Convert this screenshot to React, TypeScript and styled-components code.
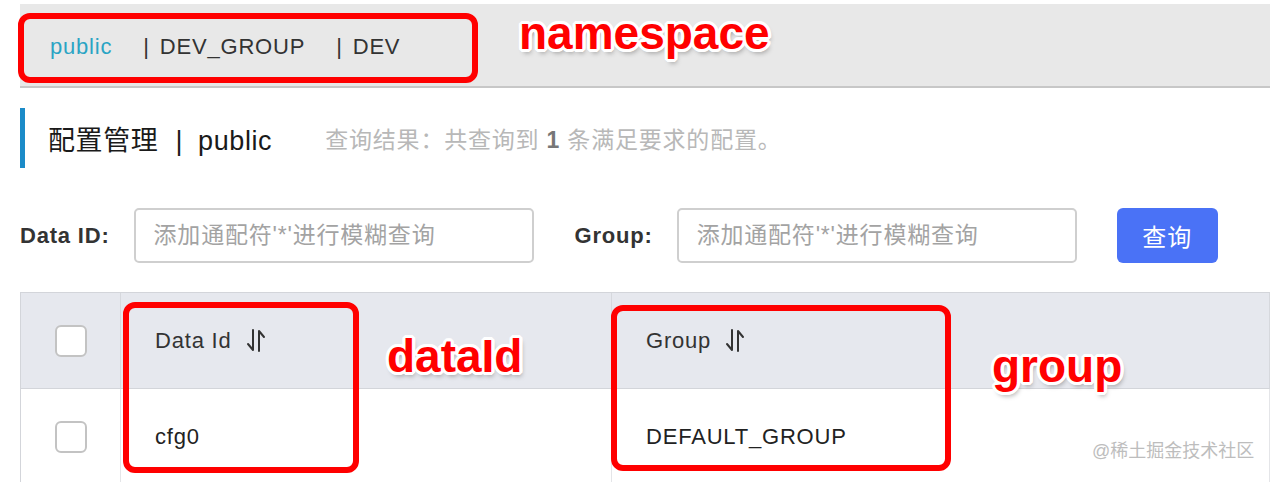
import styled, { createGlobalStyle } from "styled-components"

const GlobalStyle = createGlobalStyle`
  html, body {
    margin: 0;
    padding: 0;
    background: #ffffff;
  }
  body {
    font-family: "Liberation Sans", "Noto Sans CJK SC", sans-serif;
    letter-spacing: 0.8px;
    color: #333;
  }
`

const namespaces = ["public", "DEV_GROUP", "DEV"]

const SortIcon = () => (
  <svg width="20" height="25" viewBox="0 0 20 25" fill="none" stroke="#333" strokeWidth="2" strokeLinecap="round" strokeLinejoin="round">
    <path d="M7 2 V22 L2 16" />
    <path d="M13 23 V3 L18 9" />
  </svg>
)

export default function App() {
  return (
    <Page>
      <GlobalStyle />
      <TopBar>
        {namespaces.map((name, i) => (
          <NsItem key={name} $active={i === 0}>
            {i > 0 && <NsBar>|</NsBar>}
            {name}
          </NsItem>
        ))}
      </TopBar>

      <Heading>
        <Title>
          配置管理<TitleSep>|</TitleSep>public
        </Title>
        <Summary>
          查询结果：共查询到 <strong>1</strong> 条满足要求的配置。
        </Summary>
      </Heading>

      <SearchRow>
        <Label>Data ID:</Label>
        <Input placeholder="添加通配符'*'进行模糊查询" />
        <Label $gap>Group:</Label>
        <Input placeholder="添加通配符'*'进行模糊查询" />
        <QueryButton>查询</QueryButton>
      </SearchRow>

      <Table>
        <HeadCell $center>
          <Checkbox />
        </HeadCell>
        <HeadCell>
          Data Id <SortIcon />
        </HeadCell>
        <HeadCell>
          Group <SortIcon />
        </HeadCell>
        <BodyCell $center>
          <Checkbox />
        </BodyCell>
        <BodyCell>cfg0</BodyCell>
        <BodyCell>DEFAULT_GROUP</BodyCell>
      </Table>

      <Watermark>@稀土掘金技术社区</Watermark>

      <MarkBox style={{left: 18, top: 13, width: 460, height: 70}} />
      <MarkBox style={{left: 123, top: 302, width: 236, height: 171}} />
      <MarkBox style={{left: 611, top: 305, width: 340, height: 166}} />
      <MarkText style={{left: 519, top: 10}}>namespace</MarkText>
      <MarkText style={{left: 387, top: 333}}>dataId</MarkText>
      <MarkText style={{left: 992, top: 343}}>group</MarkText>
    </Page>
  )
}

const Page = styled.div`
    position: relative;
    width: 1270px;
    height: 482px;
    overflow: hidden;
    padding: 4px 0 0 20px;
    box-sizing: border-box;
`

const TopBar = styled.div`
    display: flex;
    align-items: center;
    height: 84px;
    padding: 3px 0 0 30px;
    box-sizing: border-box;
    background: #e8e8e8;
    border-bottom: 2px solid #c7c7c7;
    font-size: 22px;
`

const NsItem = styled.span<{$active?: boolean}>`
    display: flex;
    align-items: center;
    margin-right: 31px;
    color: ${({$active}) => ($active ? "#2aa4c4" : "#333")};
`

const NsBar = styled.span`
    margin-right: 10px;
    color: #333;
`

const Heading = styled.div`
    display: flex;
    align-items: center;
    height: 60px;
    margin-top: 20px;
    padding-left: 23px;
    border-left: 5px solid #1b8bc8;
`

const Title = styled.div`
    font-size: 27px;
    letter-spacing: 0.6px;
    color: #1a1a1a;
`

const TitleSep = styled.span`
    margin: 0 15px 0 17px;
`

const Summary = styled.div`
    margin-left: 53px;
    font-size: 23px;
    color: #b8b8b8;

    strong {
        color: #777;
    }
`

const SearchRow = styled.div`
    display: flex;
    align-items: center;
    height: 55px;
    margin-top: 40px;
`

const Label = styled.label<{$gap?: boolean}>`
    font-size: 22px;
    font-weight: bold;
    color: #333;
    margin-left: ${({$gap}) => ($gap ? "41px" : "0")};
    margin-right: 24px;
`

const Input = styled.input`
    width: 400px;
    height: 55px;
    box-sizing: border-box;
    padding: 0 18px;
    border: 2px solid #cfcfcf;
    border-radius: 5px;
    font-family: inherit;
    font-size: 23px;
    letter-spacing: 0.8px;
    outline: none;

    &::placeholder {
        color: #a3a3a3;
    }
`

const QueryButton = styled.button`
    width: 101px;
    height: 55px;
    margin-left: 40px;
    border: none;
    border-radius: 6px;
    background: #4a72f6;
    color: #fff;
    font-family: inherit;
    font-size: 24px;
    letter-spacing: 1px;
`

const Table = styled.div`
    display: grid;
    grid-template-columns: 100px 491px 1fr;
    grid-template-rows: 96px 96px;
    margin-top: 29px;
    border-top: 1px solid #d3d5da;
    border-left: 1px solid #d3d5da;
`

const HeadCell = styled.div<{$center?: boolean}>`
    display: flex;
    align-items: center;
    justify-content: ${({$center}) => ($center ? "center" : "flex-start")};
    gap: 14px;
    padding-left: ${({$center}) => ($center ? "0" : "34px")};
    background: #e6e8ee;
    border-right: 1px solid #d6d8dd;
    border-bottom: 1px solid #d3d5da;
    font-size: 22px;
    color: #333;
`

const BodyCell = styled.div<{$center?: boolean}>`
    display: flex;
    align-items: center;
    justify-content: ${({$center}) => ($center ? "center" : "flex-start")};
    padding-left: ${({$center}) => ($center ? "0" : "34px")};
    background: #fff;
    border-right: 1px solid #e4e5e8;
    font-size: 22px;
    color: #222;
`

const Checkbox = styled.span`
    display: block;
    width: 32px;
    height: 32px;
    box-sizing: border-box;
    border: 2px solid #c3c3c3;
    border-radius: 6px;
    background: #fff;
`

const Watermark = styled.div`
    position: absolute;
    left: 1092px;
    top: 436px;
    font-size: 18px;
    letter-spacing: 0;
    color: #bdbdbd;
`

const MarkBox = styled.div`
    position: absolute;
    box-sizing: border-box;
    border: 6px solid #ff0000;
    border-radius: 12px;
`

const MarkText = styled.div`
    position: absolute;
    font-family: "Liberation Sans", sans-serif;
    font-weight: bold;
    font-size: 46px;
    line-height: 1;
    letter-spacing: 0;
    color: #ff0000;
    text-shadow:
        3px 0 0 #fff, -3px 0 0 #fff, 0 3px 0 #fff, 0 -3px 0 #fff,
        2px 2px 0 #fff, -2px 2px 0 #fff, 2px -2px 0 #fff, -2px -2px 0 #fff,
        3px 1px 0 #fff, -3px 1px 0 #fff, 3px -1px 0 #fff, -3px -1px 0 #fff,
        1px 3px 0 #fff, -1px 3px 0 #fff, 1px -3px 0 #fff, -1px -3px 0 #fff,
        2px 4px 5px rgba(0, 0, 0, 0.35);
`
